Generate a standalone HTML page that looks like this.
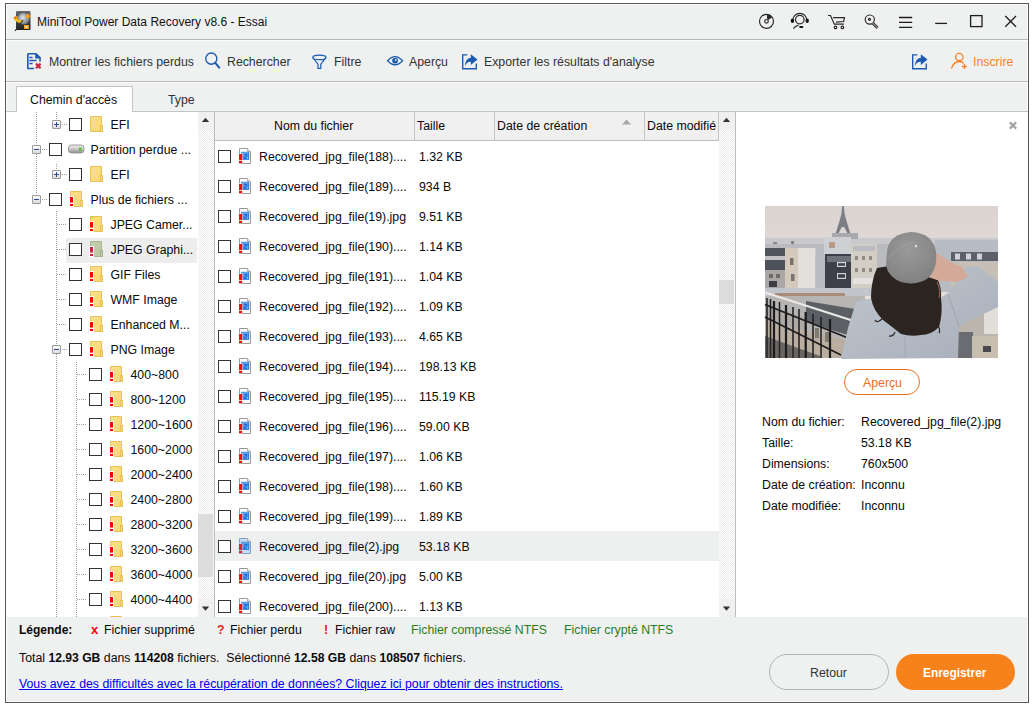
<!DOCTYPE html><html><head><meta charset="utf-8"><style>
*{box-sizing:border-box;margin:0;padding:0}
html,body{width:1032px;height:707px;overflow:hidden;background:#fff}
body{position:relative;font-family:"Liberation Sans",sans-serif;font-size:12.3px;color:#0a0a0a}
.a{position:absolute}
.t{position:absolute;white-space:nowrap;line-height:14px}
svg{position:absolute;overflow:visible}
#win{position:absolute;left:5px;top:3px;width:1024px;height:700px;border:1px solid #585858;background:#eff0f0}
#win:after{content:"";position:absolute;left:0;top:0;right:0;bottom:0;border:1px solid #fbfbfb}
.hl{position:absolute;height:1px;background:#c4c4c4}
.vl{position:absolute;width:1px;background:#c4c4c4}
b{font-size:12.15px}
.cb{position:absolute;width:13px;height:13px;border:1px solid #333;background:#fff}
.trough{position:absolute;background-color:#f7f7f7;background-image:conic-gradient(#ffffff 25%,#ececec 25% 50%,#ffffff 50% 75%,#ececec 75%);background-size:2px 2px}
.dv{position:absolute;width:1px;background-image:linear-gradient(#a0a0a0 50%,transparent 50%);background-size:1px 2px}
.dh{position:absolute;height:1px;background-image:linear-gradient(90deg,#a0a0a0 50%,transparent 50%);background-size:2px 1px}
.ex{position:absolute;width:9px;height:9px;border:1px solid #9a9a9a;border-radius:1px;background:linear-gradient(#fdfdfd,#dcdcdc)}
.ex:before{content:"";position:absolute;left:1px;top:3px;width:5px;height:1px;background:#2c4a8c}
.ex.p:after{content:"";position:absolute;left:3px;top:1px;width:1px;height:5px;background:#2c4a8c}
</style></head><body>
<div id="win"></div>
<div class="hl" style="left:6px;top:39px;width:1022px;background:#b9b9b9"></div><div class="hl" style="left:6px;top:40px;width:1022px;background:#fcfcfc"></div>
<svg style="left:12px;top:10px" width="20" height="23" viewBox="0 0 20 23">
<defs><linearGradient id="ab" x1="0" y1="0" x2="0" y2="1"><stop offset="0" stop-color="#6a6a6a"/><stop offset="1" stop-color="#1e1e1e"/></linearGradient>
<radialGradient id="ad" cx="0.45" cy="0.4" r="0.6"><stop offset="0" stop-color="#e2e6ee"/><stop offset="1" stop-color="#6f757e"/></radialGradient></defs>
<rect x="4" y="1" width="14.5" height="19" rx="1" fill="url(#ab)"/>
<circle cx="11.5" cy="8.8" r="5.8" fill="url(#ad)"/>
<path d="M1.5 8.5 Q4 5 6 6.5 L5 8 Q7 11 11 10.5 L10 13 Q4 13 1.5 8.5Z" fill="#f3b81d"/>
<path d="M1 7.5 L4.5 6 L4 9Z" fill="#f06a14"/>
<path d="M13 6 L16 3.5 L18.5 6.5 L15.5 9 Z" fill="#f7a21a"/>
<line x1="11" y1="10" x2="3" y2="21" stroke="#333" stroke-width="1.2"/>
<rect x="12" y="15" width="5" height="4" fill="#f39a1e"/><rect x="13.5" y="16" width="2" height="2" fill="#fff3b0"/>
</svg>
<div class="t" style="left:37px;top:15px;font-size:12px;color:#111">MiniTool Power Data Recovery v8.6 - Essai</div>
<svg style="left:755px;top:10px" width="62" height="22" viewBox="0 0 62 22">
<g fill="none" stroke="#2a2a2a" stroke-width="1.2">
<circle cx="11.5" cy="11.3" r="7"/>
<circle cx="11.5" cy="11.3" r="1.8"/>
<circle cx="44.8" cy="9.6" r="4.3"/>
<path d="M37.8 10.3 A7 7 0 0 1 51.8 10.3"/>
<path d="M38.4 18.6 Q40 16 43.6 15.1"/>
</g>
<path d="M12 4.3 A7 7 0 0 1 17.3 7.2 L13.3 10 A2.5 2.5 0 0 0 12 8.6Z" fill="#2a2a2a"/>
<ellipse cx="37.4" cy="10.8" rx="1.7" ry="2.2" fill="#111"/><ellipse cx="52.2" cy="10.8" rx="1.7" ry="2.2" fill="#111"/>
<rect x="44.2" y="16.1" width="4.1" height="1.8" rx="0.9" fill="#111"/>
</svg>
<svg style="left:825px;top:10px" width="62" height="22" viewBox="0 0 62 22">
<g fill="none" stroke="#2a2a2a" stroke-width="1.2">
<path d="M3 5.5 H5.5 L9.3 14.2 H19"/>
<path d="M8 7.6 H19.5 L18.6 11.5 L11 12.2"/>
<circle cx="10.5" cy="17.4" r="1.3"/><circle cx="17.4" cy="17.4" r="1.3"/>
<circle cx="44.8" cy="9.6" r="4.6"/>
<circle cx="44.5" cy="9.3" r="1"/>
<path d="M47.6 13 L52.6 18" stroke-width="2.8"/>
</g>
<path d="M47.6 13 L52.6 18" stroke="#f0f0f0" stroke-width="0.8"/>
</svg>
<svg style="left:890px;top:10px" width="140" height="22" viewBox="0 0 140 22">
<g stroke="#1e1e1e" stroke-width="1.3" fill="none">
<path d="M9 7.5 H22.2 M9 12.3 H22.2 M9 17.3 H22.2"/>
<path d="M45.2 13.4 H57"/>
<rect x="80.6" y="5.6" width="11.4" height="11"/>
<path d="M115.3 6 L126 16.8 M126 6 L115.3 16.8"/>
</g></svg>
<div class="hl" style="left:6px;top:81px;width:1022px;background:#b9b9b9"></div><div class="hl" style="left:6px;top:82px;width:1022px;background:#fcfcfc"></div>
<svg style="left:22px;top:50px" width="24" height="22" viewBox="0 0 24 22">
<path d="M5.8 3.7 H14 L18 7.7 V11.5 M12 18.5 H5.8 V3.7" fill="none" stroke="#1c5bb0" stroke-width="1.6"/>
<path d="M13.2 3 L18.6 8.4 H13.2Z" fill="#1c5bb0"/>
<path d="M7.3 7.5 H10.6 M7.3 10.5 H14.6 M7.3 13.5 H10.6" stroke="#1c5bb0" stroke-width="1.3"/>
<path d="M14 13.6 L18.6 18.2 M18.6 13.6 L14 18.2" stroke="#d2263e" stroke-width="2.2"/>
</svg>
<div class="t" style="left:49px;top:55px;color:#333">Montrer les fichiers perdus</div>
<svg style="left:200px;top:50px" width="24" height="22" viewBox="0 0 24 22">
<circle cx="11.3" cy="8.6" r="5.6" fill="none" stroke="#1c5bb0" stroke-width="1.4"/>
<path d="M15.3 12.8 L19.2 17.6" stroke="#1c5bb0" stroke-width="2" stroke-linecap="round"/>
</svg>
<div class="t" style="left:227px;top:55px;color:#333">Rechercher</div>
<svg style="left:308px;top:50px" width="24" height="22" viewBox="0 0 24 22">
<ellipse cx="11.4" cy="7.4" rx="6.6" ry="2.2" fill="none" stroke="#1c5bb0" stroke-width="1.2"/>
<path d="M4.8 7.6 L10 14.2 V18.4 H12.8 V14.2 L18 7.6" fill="none" stroke="#1c5bb0" stroke-width="1.2"/>
</svg>
<div class="t" style="left:334px;top:55px;color:#333">Filtre</div>
<svg style="left:384px;top:50px" width="24" height="22" viewBox="0 0 24 22">
<path d="M3.6 10.7 Q11 2.6 18.6 10.7 Q11 18.8 3.6 10.7Z" fill="none" stroke="#1c5bb0" stroke-width="1.3"/>
<circle cx="11.1" cy="10.6" r="2.9" fill="#1c5bb0"/>
<circle cx="11.7" cy="9.9" r="0.9" fill="#f0f0f0"/>
</svg>
<div class="t" style="left:409px;top:55px;color:#333">Aperçu</div>
<svg style="left:461px;top:53px" width="20" height="20" viewBox="0 0 20 20">
<path d="M6.3 1.9 H1.7 V15.7 H15.3 V10.5" fill="none" stroke="#1c5bb0" stroke-width="1.4"/>
<path d="M9.8 1.3 L16.5 6.6 L9.8 12 V8.8 Q5.8 8.6 3.8 13.2 Q4.2 5.5 9.8 4.7Z" fill="#1c5bb0"/>
</svg>
<div class="t" style="left:484px;top:55px;color:#333">Exporter les résultats d'analyse</div>
<svg style="left:911px;top:53px" width="20" height="20" viewBox="0 0 20 20">
<path d="M6.3 1.9 H1.7 V15.7 H15.3 V10.5" fill="none" stroke="#1c5bb0" stroke-width="1.4"/>
<path d="M9.8 1.3 L16.5 6.6 L9.8 12 V8.8 Q5.8 8.6 3.8 13.2 Q4.2 5.5 9.8 4.7Z" fill="#1c5bb0"/>
</svg>
<svg style="left:945px;top:50px" width="26" height="22" viewBox="0 0 26 22">
<circle cx="14.3" cy="7" r="3.7" fill="none" stroke="#f5822a" stroke-width="1.3"/>
<path d="M6.4 18.5 Q9 11.5 14.3 11.5 Q17 11.5 18.8 13.3" fill="none" stroke="#f5822a" stroke-width="1.3"/>
<path d="M19.4 14 V19 M16.9 16.5 H21.9" stroke="#f5822a" stroke-width="1.3"/>
</svg>
<div class="t" style="left:973px;top:55px;color:#f5822a">Inscrire</div>
<div class="hl" style="left:6px;top:111px;width:10px"></div>
<div class="hl" style="left:133px;top:111px;width:895px"></div>
<div class="a" style="left:16px;top:86px;width:117px;height:26px;border:1px solid #c4c4c4;border-bottom:none;background:#fff"></div>
<div class="t" style="left:30px;top:93px;color:#111">Chemin d'accès</div>
<div class="t" style="left:168px;top:93px;color:#333">Type</div>
<div class="a" style="left:6px;top:112px;width:192px;height:505px;background:#fff;overflow:hidden" id="tree">
<div class="ex p" style="left:46px;top:8px"></div>
<div class="dh" style="left:56px;top:12px;width:5px"></div>
<div class="cb" style="left:63px;top:6px"></div>
<svg style="left:84px;top:4px" width="14" height="17" viewBox="0 0 14 17"><defs><linearGradient id="fg0" x1="0" y1="0" x2="1" y2="1"><stop offset="0" stop-color="#fbe08a"/><stop offset="1" stop-color="#f8d775"/></linearGradient></defs><path d="M0.5 0.5 H11.5 V15.5 H0.5Z" fill="url(#fg0)" stroke="#e8c257"/><rect x="10.5" y="9.5" width="2" height="6" fill="#f8d775" stroke="#e8c257"/></svg>
<div class="t" style="left:104.5px;top:5.5px">EFI</div>
<div class="ex " style="left:26px;top:33px"></div>
<div class="dh" style="left:36px;top:37px;width:5px"></div>
<div class="cb" style="left:43px;top:31px"></div>
<svg style="left:62px;top:32px" width="17" height="10" viewBox="0 0 17 10">
<defs><linearGradient id="dg" x1="0" y1="0" x2="0" y2="1"><stop offset="0" stop-color="#f2f2f2"/><stop offset="0.5" stop-color="#c9c9c9"/><stop offset="1" stop-color="#8c8c8c"/></linearGradient></defs>
<rect x="0.5" y="1" width="15.5" height="8" rx="3" fill="url(#dg)" stroke="#9a9a9a"/>
<rect x="11" y="3.5" width="2.5" height="3.5" fill="#5bc236"/></svg>
<div class="t" style="left:84.5px;top:30.5px">Partition perdue ...</div>
<div class="ex p" style="left:46px;top:58px"></div>
<div class="dh" style="left:56px;top:62px;width:5px"></div>
<div class="cb" style="left:63px;top:56px"></div>
<svg style="left:84px;top:54px" width="14" height="17" viewBox="0 0 14 17"><defs><linearGradient id="fg0" x1="0" y1="0" x2="1" y2="1"><stop offset="0" stop-color="#fbe08a"/><stop offset="1" stop-color="#f8d775"/></linearGradient></defs><path d="M0.5 0.5 H11.5 V15.5 H0.5Z" fill="url(#fg0)" stroke="#e8c257"/><rect x="10.5" y="9.5" width="2" height="6" fill="#f8d775" stroke="#e8c257"/></svg>
<div class="t" style="left:104.5px;top:55.5px">EFI</div>
<div class="ex " style="left:26px;top:83px"></div>
<div class="dh" style="left:36px;top:87px;width:5px"></div>
<div class="cb" style="left:43px;top:81px"></div>
<svg style="left:64px;top:79px" width="14" height="17" viewBox="0 0 14 17"><defs><linearGradient id="fg0" x1="0" y1="0" x2="1" y2="1"><stop offset="0" stop-color="#fbe08a"/><stop offset="1" stop-color="#f8d775"/></linearGradient></defs><path d="M0.5 0.5 H11.5 V15.5 H0.5Z" fill="url(#fg0)" stroke="#e8c257"/><rect x="10.5" y="9.5" width="2" height="6" fill="#f8d775" stroke="#e8c257"/><rect x="-1" y="5" width="5" height="11.5" fill="#fff"/><rect x="0" y="6" width="3" height="5.6" fill="#ff0000"/><rect x="0" y="13" width="3" height="2" fill="#ff0000"/></svg>
<div class="t" style="left:84.5px;top:80.5px">Plus de fichiers ...</div>
<div class="dh" style="left:51px;top:112px;width:10px"></div>
<div class="cb" style="left:63px;top:106px"></div>
<svg style="left:84px;top:104px" width="14" height="17" viewBox="0 0 14 17"><defs><linearGradient id="fg0" x1="0" y1="0" x2="1" y2="1"><stop offset="0" stop-color="#fbe08a"/><stop offset="1" stop-color="#f8d775"/></linearGradient></defs><path d="M0.5 0.5 H11.5 V15.5 H0.5Z" fill="url(#fg0)" stroke="#e8c257"/><rect x="10.5" y="9.5" width="2" height="6" fill="#f8d775" stroke="#e8c257"/><rect x="-1" y="5" width="5" height="11.5" fill="#fff"/><rect x="0" y="6" width="3" height="5.6" fill="#ff0000"/><rect x="0" y="13" width="3" height="2" fill="#ff0000"/></svg>
<div class="t" style="left:104.5px;top:105.5px">JPEG Camer...</div>
<div class="a" style="left:60px;top:126px;width:131px;height:25px;background:#ededed"></div>
<div class="dh" style="left:51px;top:137px;width:10px"></div>
<div class="cb" style="left:63px;top:131px"></div>
<svg style="left:84px;top:129px" width="14" height="17" viewBox="0 0 14 17"><defs><linearGradient id="fg1" x1="0" y1="0" x2="1" y2="1"><stop offset="0" stop-color="#c5cfae"/><stop offset="1" stop-color="#bcc6a4"/></linearGradient></defs><path d="M0.5 0.5 H11.5 V15.5 H0.5Z" fill="url(#fg1)" stroke="#a9b58e"/><rect x="10.5" y="9.5" width="2" height="6" fill="#bcc6a4" stroke="#a9b58e"/><rect x="-1" y="5" width="5" height="11.5" fill="#fff"/><rect x="0" y="6" width="3" height="5.6" fill="#c8283c"/><rect x="0" y="13" width="3" height="2" fill="#c8283c"/></svg>
<div class="t" style="left:104.5px;top:130.5px">JPEG Graphi...</div>
<div class="dh" style="left:51px;top:162px;width:10px"></div>
<div class="cb" style="left:63px;top:156px"></div>
<svg style="left:84px;top:154px" width="14" height="17" viewBox="0 0 14 17"><defs><linearGradient id="fg0" x1="0" y1="0" x2="1" y2="1"><stop offset="0" stop-color="#fbe08a"/><stop offset="1" stop-color="#f8d775"/></linearGradient></defs><path d="M0.5 0.5 H11.5 V15.5 H0.5Z" fill="url(#fg0)" stroke="#e8c257"/><rect x="10.5" y="9.5" width="2" height="6" fill="#f8d775" stroke="#e8c257"/><rect x="-1" y="5" width="5" height="11.5" fill="#fff"/><rect x="0" y="6" width="3" height="5.6" fill="#ff0000"/><rect x="0" y="13" width="3" height="2" fill="#ff0000"/></svg>
<div class="t" style="left:104.5px;top:155.5px">GIF Files</div>
<div class="dh" style="left:51px;top:187px;width:10px"></div>
<div class="cb" style="left:63px;top:181px"></div>
<svg style="left:84px;top:179px" width="14" height="17" viewBox="0 0 14 17"><defs><linearGradient id="fg0" x1="0" y1="0" x2="1" y2="1"><stop offset="0" stop-color="#fbe08a"/><stop offset="1" stop-color="#f8d775"/></linearGradient></defs><path d="M0.5 0.5 H11.5 V15.5 H0.5Z" fill="url(#fg0)" stroke="#e8c257"/><rect x="10.5" y="9.5" width="2" height="6" fill="#f8d775" stroke="#e8c257"/><rect x="-1" y="5" width="5" height="11.5" fill="#fff"/><rect x="0" y="6" width="3" height="5.6" fill="#ff0000"/><rect x="0" y="13" width="3" height="2" fill="#ff0000"/></svg>
<div class="t" style="left:104.5px;top:180.5px">WMF Image</div>
<div class="dh" style="left:51px;top:212px;width:10px"></div>
<div class="cb" style="left:63px;top:206px"></div>
<svg style="left:84px;top:204px" width="14" height="17" viewBox="0 0 14 17"><defs><linearGradient id="fg0" x1="0" y1="0" x2="1" y2="1"><stop offset="0" stop-color="#fbe08a"/><stop offset="1" stop-color="#f8d775"/></linearGradient></defs><path d="M0.5 0.5 H11.5 V15.5 H0.5Z" fill="url(#fg0)" stroke="#e8c257"/><rect x="10.5" y="9.5" width="2" height="6" fill="#f8d775" stroke="#e8c257"/><rect x="-1" y="5" width="5" height="11.5" fill="#fff"/><rect x="0" y="6" width="3" height="5.6" fill="#ff0000"/><rect x="0" y="13" width="3" height="2" fill="#ff0000"/></svg>
<div class="t" style="left:104.5px;top:205.5px">Enhanced M...</div>
<div class="ex " style="left:46px;top:233px"></div>
<div class="dh" style="left:56px;top:237px;width:5px"></div>
<div class="cb" style="left:63px;top:231px"></div>
<svg style="left:84px;top:229px" width="14" height="17" viewBox="0 0 14 17"><defs><linearGradient id="fg0" x1="0" y1="0" x2="1" y2="1"><stop offset="0" stop-color="#fbe08a"/><stop offset="1" stop-color="#f8d775"/></linearGradient></defs><path d="M0.5 0.5 H11.5 V15.5 H0.5Z" fill="url(#fg0)" stroke="#e8c257"/><rect x="10.5" y="9.5" width="2" height="6" fill="#f8d775" stroke="#e8c257"/><rect x="-1" y="5" width="5" height="11.5" fill="#fff"/><rect x="0" y="6" width="3" height="5.6" fill="#ff0000"/><rect x="0" y="13" width="3" height="2" fill="#ff0000"/></svg>
<div class="t" style="left:104.5px;top:230.5px">PNG Image</div>
<div class="dh" style="left:71px;top:262px;width:10px"></div>
<div class="cb" style="left:83px;top:256px"></div>
<svg style="left:104px;top:254px" width="14" height="17" viewBox="0 0 14 17"><defs><linearGradient id="fg0" x1="0" y1="0" x2="1" y2="1"><stop offset="0" stop-color="#fbe08a"/><stop offset="1" stop-color="#f8d775"/></linearGradient></defs><path d="M0.5 0.5 H11.5 V15.5 H0.5Z" fill="url(#fg0)" stroke="#e8c257"/><rect x="10.5" y="9.5" width="2" height="6" fill="#f8d775" stroke="#e8c257"/><rect x="-1" y="5" width="5" height="11.5" fill="#fff"/><rect x="0" y="6" width="3" height="5.6" fill="#ff0000"/><rect x="0" y="13" width="3" height="2" fill="#ff0000"/></svg>
<div class="t" style="left:124.5px;top:255.5px">400~800</div>
<div class="dh" style="left:71px;top:287px;width:10px"></div>
<div class="cb" style="left:83px;top:281px"></div>
<svg style="left:104px;top:279px" width="14" height="17" viewBox="0 0 14 17"><defs><linearGradient id="fg0" x1="0" y1="0" x2="1" y2="1"><stop offset="0" stop-color="#fbe08a"/><stop offset="1" stop-color="#f8d775"/></linearGradient></defs><path d="M0.5 0.5 H11.5 V15.5 H0.5Z" fill="url(#fg0)" stroke="#e8c257"/><rect x="10.5" y="9.5" width="2" height="6" fill="#f8d775" stroke="#e8c257"/><rect x="-1" y="5" width="5" height="11.5" fill="#fff"/><rect x="0" y="6" width="3" height="5.6" fill="#ff0000"/><rect x="0" y="13" width="3" height="2" fill="#ff0000"/></svg>
<div class="t" style="left:124.5px;top:280.5px">800~1200</div>
<div class="dh" style="left:71px;top:312px;width:10px"></div>
<div class="cb" style="left:83px;top:306px"></div>
<svg style="left:104px;top:304px" width="14" height="17" viewBox="0 0 14 17"><defs><linearGradient id="fg0" x1="0" y1="0" x2="1" y2="1"><stop offset="0" stop-color="#fbe08a"/><stop offset="1" stop-color="#f8d775"/></linearGradient></defs><path d="M0.5 0.5 H11.5 V15.5 H0.5Z" fill="url(#fg0)" stroke="#e8c257"/><rect x="10.5" y="9.5" width="2" height="6" fill="#f8d775" stroke="#e8c257"/><rect x="-1" y="5" width="5" height="11.5" fill="#fff"/><rect x="0" y="6" width="3" height="5.6" fill="#ff0000"/><rect x="0" y="13" width="3" height="2" fill="#ff0000"/></svg>
<div class="t" style="left:124.5px;top:305.5px">1200~1600</div>
<div class="dh" style="left:71px;top:337px;width:10px"></div>
<div class="cb" style="left:83px;top:331px"></div>
<svg style="left:104px;top:329px" width="14" height="17" viewBox="0 0 14 17"><defs><linearGradient id="fg0" x1="0" y1="0" x2="1" y2="1"><stop offset="0" stop-color="#fbe08a"/><stop offset="1" stop-color="#f8d775"/></linearGradient></defs><path d="M0.5 0.5 H11.5 V15.5 H0.5Z" fill="url(#fg0)" stroke="#e8c257"/><rect x="10.5" y="9.5" width="2" height="6" fill="#f8d775" stroke="#e8c257"/><rect x="-1" y="5" width="5" height="11.5" fill="#fff"/><rect x="0" y="6" width="3" height="5.6" fill="#ff0000"/><rect x="0" y="13" width="3" height="2" fill="#ff0000"/></svg>
<div class="t" style="left:124.5px;top:330.5px">1600~2000</div>
<div class="dh" style="left:71px;top:362px;width:10px"></div>
<div class="cb" style="left:83px;top:356px"></div>
<svg style="left:104px;top:354px" width="14" height="17" viewBox="0 0 14 17"><defs><linearGradient id="fg0" x1="0" y1="0" x2="1" y2="1"><stop offset="0" stop-color="#fbe08a"/><stop offset="1" stop-color="#f8d775"/></linearGradient></defs><path d="M0.5 0.5 H11.5 V15.5 H0.5Z" fill="url(#fg0)" stroke="#e8c257"/><rect x="10.5" y="9.5" width="2" height="6" fill="#f8d775" stroke="#e8c257"/><rect x="-1" y="5" width="5" height="11.5" fill="#fff"/><rect x="0" y="6" width="3" height="5.6" fill="#ff0000"/><rect x="0" y="13" width="3" height="2" fill="#ff0000"/></svg>
<div class="t" style="left:124.5px;top:355.5px">2000~2400</div>
<div class="dh" style="left:71px;top:387px;width:10px"></div>
<div class="cb" style="left:83px;top:381px"></div>
<svg style="left:104px;top:379px" width="14" height="17" viewBox="0 0 14 17"><defs><linearGradient id="fg0" x1="0" y1="0" x2="1" y2="1"><stop offset="0" stop-color="#fbe08a"/><stop offset="1" stop-color="#f8d775"/></linearGradient></defs><path d="M0.5 0.5 H11.5 V15.5 H0.5Z" fill="url(#fg0)" stroke="#e8c257"/><rect x="10.5" y="9.5" width="2" height="6" fill="#f8d775" stroke="#e8c257"/><rect x="-1" y="5" width="5" height="11.5" fill="#fff"/><rect x="0" y="6" width="3" height="5.6" fill="#ff0000"/><rect x="0" y="13" width="3" height="2" fill="#ff0000"/></svg>
<div class="t" style="left:124.5px;top:380.5px">2400~2800</div>
<div class="dh" style="left:71px;top:412px;width:10px"></div>
<div class="cb" style="left:83px;top:406px"></div>
<svg style="left:104px;top:404px" width="14" height="17" viewBox="0 0 14 17"><defs><linearGradient id="fg0" x1="0" y1="0" x2="1" y2="1"><stop offset="0" stop-color="#fbe08a"/><stop offset="1" stop-color="#f8d775"/></linearGradient></defs><path d="M0.5 0.5 H11.5 V15.5 H0.5Z" fill="url(#fg0)" stroke="#e8c257"/><rect x="10.5" y="9.5" width="2" height="6" fill="#f8d775" stroke="#e8c257"/><rect x="-1" y="5" width="5" height="11.5" fill="#fff"/><rect x="0" y="6" width="3" height="5.6" fill="#ff0000"/><rect x="0" y="13" width="3" height="2" fill="#ff0000"/></svg>
<div class="t" style="left:124.5px;top:405.5px">2800~3200</div>
<div class="dh" style="left:71px;top:437px;width:10px"></div>
<div class="cb" style="left:83px;top:431px"></div>
<svg style="left:104px;top:429px" width="14" height="17" viewBox="0 0 14 17"><defs><linearGradient id="fg0" x1="0" y1="0" x2="1" y2="1"><stop offset="0" stop-color="#fbe08a"/><stop offset="1" stop-color="#f8d775"/></linearGradient></defs><path d="M0.5 0.5 H11.5 V15.5 H0.5Z" fill="url(#fg0)" stroke="#e8c257"/><rect x="10.5" y="9.5" width="2" height="6" fill="#f8d775" stroke="#e8c257"/><rect x="-1" y="5" width="5" height="11.5" fill="#fff"/><rect x="0" y="6" width="3" height="5.6" fill="#ff0000"/><rect x="0" y="13" width="3" height="2" fill="#ff0000"/></svg>
<div class="t" style="left:124.5px;top:430.5px">3200~3600</div>
<div class="dh" style="left:71px;top:462px;width:10px"></div>
<div class="cb" style="left:83px;top:456px"></div>
<svg style="left:104px;top:454px" width="14" height="17" viewBox="0 0 14 17"><defs><linearGradient id="fg0" x1="0" y1="0" x2="1" y2="1"><stop offset="0" stop-color="#fbe08a"/><stop offset="1" stop-color="#f8d775"/></linearGradient></defs><path d="M0.5 0.5 H11.5 V15.5 H0.5Z" fill="url(#fg0)" stroke="#e8c257"/><rect x="10.5" y="9.5" width="2" height="6" fill="#f8d775" stroke="#e8c257"/><rect x="-1" y="5" width="5" height="11.5" fill="#fff"/><rect x="0" y="6" width="3" height="5.6" fill="#ff0000"/><rect x="0" y="13" width="3" height="2" fill="#ff0000"/></svg>
<div class="t" style="left:124.5px;top:455.5px">3600~4000</div>
<div class="dh" style="left:71px;top:487px;width:10px"></div>
<div class="cb" style="left:83px;top:481px"></div>
<svg style="left:104px;top:479px" width="14" height="17" viewBox="0 0 14 17"><defs><linearGradient id="fg0" x1="0" y1="0" x2="1" y2="1"><stop offset="0" stop-color="#fbe08a"/><stop offset="1" stop-color="#f8d775"/></linearGradient></defs><path d="M0.5 0.5 H11.5 V15.5 H0.5Z" fill="url(#fg0)" stroke="#e8c257"/><rect x="10.5" y="9.5" width="2" height="6" fill="#f8d775" stroke="#e8c257"/><rect x="-1" y="5" width="5" height="11.5" fill="#fff"/><rect x="0" y="6" width="3" height="5.6" fill="#ff0000"/><rect x="0" y="13" width="3" height="2" fill="#ff0000"/></svg>
<div class="t" style="left:124.5px;top:480.5px">4000~4400</div>
<div class="dh" style="left:71px;top:512px;width:10px"></div>
<div class="cb" style="left:83px;top:506px"></div>
<svg style="left:104px;top:504px" width="14" height="17" viewBox="0 0 14 17"><defs><linearGradient id="fg0" x1="0" y1="0" x2="1" y2="1"><stop offset="0" stop-color="#fbe08a"/><stop offset="1" stop-color="#f8d775"/></linearGradient></defs><path d="M0.5 0.5 H11.5 V15.5 H0.5Z" fill="url(#fg0)" stroke="#e8c257"/><rect x="10.5" y="9.5" width="2" height="6" fill="#f8d775" stroke="#e8c257"/><rect x="-1" y="5" width="5" height="11.5" fill="#fff"/><rect x="0" y="6" width="3" height="5.6" fill="#ff0000"/><rect x="0" y="13" width="3" height="2" fill="#ff0000"/></svg>
<div class="dv" style="left:30px;top:0px;height:32px"></div>
<div class="dv" style="left:30px;top:42px;height:40px"></div>
<div class="dv" style="left:50px;top:0px;height:8px"></div>
<div class="dv" style="left:50px;top:52px;height:6px"></div>
<div class="dv" style="left:50px;top:99px;height:134px"></div>
<div class="dv" style="left:50px;top:242px;height:263px"></div>
<div class="dv" style="left:70px;top:250px;height:255px"></div>
</div>
<div class="trough" style="left:198px;top:112px;width:16px;height:505px"></div>
<div class="a" style="left:198px;top:112px;width:16px;height:18px;background:#f0f0f0"></div>
<div class="a" style="left:198px;top:599px;width:16px;height:18px;background:#f0f0f0"></div>
<div class="a" style="left:198px;top:514px;width:15px;height:63px;background:#dcdcdc"></div>
<svg style="left:198px;top:112px" width="16" height="505" viewBox="0 0 16 505"><path d="M3.8 10 L7.5 5.8 L11.2 10Z" fill="#333"/><path d="M3.8 494.5 L7.5 498.7 L11.2 494.5Z" fill="#333"/></svg>
<div class="vl" style="left:214px;top:112px;height:505px;background:#bdbdbd"></div>
<div class="a" style="left:215px;top:112px;width:504px;height:505px;background:#fff;overflow:hidden">
<div class="a" style="left:0;top:0;width:504px;height:28px;background:#f0f0f0"></div>
<div class="hl" style="left:0;top:28px;width:504px;background:#bdbdbd"></div>
<div class="vl" style="left:199px;top:0;height:28px;background:#c6c6c6"></div>
<div class="vl" style="left:279px;top:0;height:28px;background:#c6c6c6"></div>
<div class="vl" style="left:429px;top:0;height:28px;background:#c6c6c6"></div>
<div class="vl" style="left:503px;top:0;height:28px;background:#c6c6c6"></div>
<div class="t" style="left:59px;top:7px;">Nom du fichier</div>
<div class="t" style="left:202px;top:7px;">Taille</div>
<div class="t" style="left:282px;top:7px;">Date de création</div>
<div class="t" style="left:432px;top:7px;">Date modifié</div>
<svg style="left:407px;top:7px" width="10" height="6" viewBox="0 0 10 6"><path d="M0 5.5 L4.5 0.5 L9 5.5Z" fill="#a8a8a8"/></svg>
<div class="cb" style="left:3px;top:38px"></div>
<svg style="left:23px;top:34px" width="14" height="18" viewBox="0 0 14 18">
<path d="M1.5 2.5 H9.5 L12.5 5.5 V17.5 H1.5Z" fill="#fff" stroke="#9a9a9a"/>
<path d="M9.5 2.5 V5.5 H12.5" fill="#e8e8e8" stroke="#b0b0b0"/>
<rect x="3.2" y="5.8" width="8" height="8" fill="#1a73d9"/>
<rect x="4" y="6.6" width="6.6" height="0.8" fill="#bcd8fb"/>
<path d="M5 8.4 L9.8 12.8 M5 8.4 V12.8 M9.8 8.4 V12.8" stroke="#9cc6f7" stroke-width="0.7" fill="none"/>
<rect x="0.5" y="7.5" width="4" height="10" fill="#fff"/>
<rect x="1" y="8" width="3.2" height="6.2" fill="#ee1111"/><rect x="1" y="15" width="3.2" height="2.2" fill="#ee1111"/>
</svg>
<div class="t" style="left:44px;top:38px;">Recovered_jpg_file(188)....</div>
<div class="t" style="left:204px;top:38px;">1.32 KB</div>
<div class="cb" style="left:3px;top:68px"></div>
<svg style="left:23px;top:64px" width="14" height="18" viewBox="0 0 14 18">
<path d="M1.5 2.5 H9.5 L12.5 5.5 V17.5 H1.5Z" fill="#fff" stroke="#9a9a9a"/>
<path d="M9.5 2.5 V5.5 H12.5" fill="#e8e8e8" stroke="#b0b0b0"/>
<rect x="3.2" y="5.8" width="8" height="8" fill="#1a73d9"/>
<rect x="4" y="6.6" width="6.6" height="0.8" fill="#bcd8fb"/>
<path d="M5 8.4 L9.8 12.8 M5 8.4 V12.8 M9.8 8.4 V12.8" stroke="#9cc6f7" stroke-width="0.7" fill="none"/>
<rect x="0.5" y="7.5" width="4" height="10" fill="#fff"/>
<rect x="1" y="8" width="3.2" height="6.2" fill="#ee1111"/><rect x="1" y="15" width="3.2" height="2.2" fill="#ee1111"/>
</svg>
<div class="t" style="left:44px;top:68px;">Recovered_jpg_file(189)....</div>
<div class="t" style="left:204px;top:68px;">934 B</div>
<div class="cb" style="left:3px;top:98px"></div>
<svg style="left:23px;top:94px" width="14" height="18" viewBox="0 0 14 18">
<path d="M1.5 2.5 H9.5 L12.5 5.5 V17.5 H1.5Z" fill="#fff" stroke="#9a9a9a"/>
<path d="M9.5 2.5 V5.5 H12.5" fill="#e8e8e8" stroke="#b0b0b0"/>
<rect x="3.2" y="5.8" width="8" height="8" fill="#1a73d9"/>
<rect x="4" y="6.6" width="6.6" height="0.8" fill="#bcd8fb"/>
<path d="M5 8.4 L9.8 12.8 M5 8.4 V12.8 M9.8 8.4 V12.8" stroke="#9cc6f7" stroke-width="0.7" fill="none"/>
<rect x="0.5" y="7.5" width="4" height="10" fill="#fff"/>
<rect x="1" y="8" width="3.2" height="6.2" fill="#ee1111"/><rect x="1" y="15" width="3.2" height="2.2" fill="#ee1111"/>
</svg>
<div class="t" style="left:44px;top:98px;">Recovered_jpg_file(19).jpg</div>
<div class="t" style="left:204px;top:98px;">9.51 KB</div>
<div class="cb" style="left:3px;top:128px"></div>
<svg style="left:23px;top:124px" width="14" height="18" viewBox="0 0 14 18">
<path d="M1.5 2.5 H9.5 L12.5 5.5 V17.5 H1.5Z" fill="#fff" stroke="#9a9a9a"/>
<path d="M9.5 2.5 V5.5 H12.5" fill="#e8e8e8" stroke="#b0b0b0"/>
<rect x="3.2" y="5.8" width="8" height="8" fill="#1a73d9"/>
<rect x="4" y="6.6" width="6.6" height="0.8" fill="#bcd8fb"/>
<path d="M5 8.4 L9.8 12.8 M5 8.4 V12.8 M9.8 8.4 V12.8" stroke="#9cc6f7" stroke-width="0.7" fill="none"/>
<rect x="0.5" y="7.5" width="4" height="10" fill="#fff"/>
<rect x="1" y="8" width="3.2" height="6.2" fill="#ee1111"/><rect x="1" y="15" width="3.2" height="2.2" fill="#ee1111"/>
</svg>
<div class="t" style="left:44px;top:128px;">Recovered_jpg_file(190)....</div>
<div class="t" style="left:204px;top:128px;">1.14 KB</div>
<div class="cb" style="left:3px;top:158px"></div>
<svg style="left:23px;top:154px" width="14" height="18" viewBox="0 0 14 18">
<path d="M1.5 2.5 H9.5 L12.5 5.5 V17.5 H1.5Z" fill="#fff" stroke="#9a9a9a"/>
<path d="M9.5 2.5 V5.5 H12.5" fill="#e8e8e8" stroke="#b0b0b0"/>
<rect x="3.2" y="5.8" width="8" height="8" fill="#1a73d9"/>
<rect x="4" y="6.6" width="6.6" height="0.8" fill="#bcd8fb"/>
<path d="M5 8.4 L9.8 12.8 M5 8.4 V12.8 M9.8 8.4 V12.8" stroke="#9cc6f7" stroke-width="0.7" fill="none"/>
<rect x="0.5" y="7.5" width="4" height="10" fill="#fff"/>
<rect x="1" y="8" width="3.2" height="6.2" fill="#ee1111"/><rect x="1" y="15" width="3.2" height="2.2" fill="#ee1111"/>
</svg>
<div class="t" style="left:44px;top:158px;">Recovered_jpg_file(191)....</div>
<div class="t" style="left:204px;top:158px;">1.04 KB</div>
<div class="cb" style="left:3px;top:188px"></div>
<svg style="left:23px;top:184px" width="14" height="18" viewBox="0 0 14 18">
<path d="M1.5 2.5 H9.5 L12.5 5.5 V17.5 H1.5Z" fill="#fff" stroke="#9a9a9a"/>
<path d="M9.5 2.5 V5.5 H12.5" fill="#e8e8e8" stroke="#b0b0b0"/>
<rect x="3.2" y="5.8" width="8" height="8" fill="#1a73d9"/>
<rect x="4" y="6.6" width="6.6" height="0.8" fill="#bcd8fb"/>
<path d="M5 8.4 L9.8 12.8 M5 8.4 V12.8 M9.8 8.4 V12.8" stroke="#9cc6f7" stroke-width="0.7" fill="none"/>
<rect x="0.5" y="7.5" width="4" height="10" fill="#fff"/>
<rect x="1" y="8" width="3.2" height="6.2" fill="#ee1111"/><rect x="1" y="15" width="3.2" height="2.2" fill="#ee1111"/>
</svg>
<div class="t" style="left:44px;top:188px;">Recovered_jpg_file(192)....</div>
<div class="t" style="left:204px;top:188px;">1.09 KB</div>
<div class="cb" style="left:3px;top:218px"></div>
<svg style="left:23px;top:214px" width="14" height="18" viewBox="0 0 14 18">
<path d="M1.5 2.5 H9.5 L12.5 5.5 V17.5 H1.5Z" fill="#fff" stroke="#9a9a9a"/>
<path d="M9.5 2.5 V5.5 H12.5" fill="#e8e8e8" stroke="#b0b0b0"/>
<rect x="3.2" y="5.8" width="8" height="8" fill="#1a73d9"/>
<rect x="4" y="6.6" width="6.6" height="0.8" fill="#bcd8fb"/>
<path d="M5 8.4 L9.8 12.8 M5 8.4 V12.8 M9.8 8.4 V12.8" stroke="#9cc6f7" stroke-width="0.7" fill="none"/>
<rect x="0.5" y="7.5" width="4" height="10" fill="#fff"/>
<rect x="1" y="8" width="3.2" height="6.2" fill="#ee1111"/><rect x="1" y="15" width="3.2" height="2.2" fill="#ee1111"/>
</svg>
<div class="t" style="left:44px;top:218px;">Recovered_jpg_file(193)....</div>
<div class="t" style="left:204px;top:218px;">4.65 KB</div>
<div class="cb" style="left:3px;top:248px"></div>
<svg style="left:23px;top:244px" width="14" height="18" viewBox="0 0 14 18">
<path d="M1.5 2.5 H9.5 L12.5 5.5 V17.5 H1.5Z" fill="#fff" stroke="#9a9a9a"/>
<path d="M9.5 2.5 V5.5 H12.5" fill="#e8e8e8" stroke="#b0b0b0"/>
<rect x="3.2" y="5.8" width="8" height="8" fill="#1a73d9"/>
<rect x="4" y="6.6" width="6.6" height="0.8" fill="#bcd8fb"/>
<path d="M5 8.4 L9.8 12.8 M5 8.4 V12.8 M9.8 8.4 V12.8" stroke="#9cc6f7" stroke-width="0.7" fill="none"/>
<rect x="0.5" y="7.5" width="4" height="10" fill="#fff"/>
<rect x="1" y="8" width="3.2" height="6.2" fill="#ee1111"/><rect x="1" y="15" width="3.2" height="2.2" fill="#ee1111"/>
</svg>
<div class="t" style="left:44px;top:248px;">Recovered_jpg_file(194)....</div>
<div class="t" style="left:204px;top:248px;">198.13 KB</div>
<div class="cb" style="left:3px;top:278px"></div>
<svg style="left:23px;top:274px" width="14" height="18" viewBox="0 0 14 18">
<path d="M1.5 2.5 H9.5 L12.5 5.5 V17.5 H1.5Z" fill="#fff" stroke="#9a9a9a"/>
<path d="M9.5 2.5 V5.5 H12.5" fill="#e8e8e8" stroke="#b0b0b0"/>
<rect x="3.2" y="5.8" width="8" height="8" fill="#1a73d9"/>
<rect x="4" y="6.6" width="6.6" height="0.8" fill="#bcd8fb"/>
<path d="M5 8.4 L9.8 12.8 M5 8.4 V12.8 M9.8 8.4 V12.8" stroke="#9cc6f7" stroke-width="0.7" fill="none"/>
<rect x="0.5" y="7.5" width="4" height="10" fill="#fff"/>
<rect x="1" y="8" width="3.2" height="6.2" fill="#ee1111"/><rect x="1" y="15" width="3.2" height="2.2" fill="#ee1111"/>
</svg>
<div class="t" style="left:44px;top:278px;">Recovered_jpg_file(195)....</div>
<div class="t" style="left:204px;top:278px;">115.19 KB</div>
<div class="cb" style="left:3px;top:308px"></div>
<svg style="left:23px;top:304px" width="14" height="18" viewBox="0 0 14 18">
<path d="M1.5 2.5 H9.5 L12.5 5.5 V17.5 H1.5Z" fill="#fff" stroke="#9a9a9a"/>
<path d="M9.5 2.5 V5.5 H12.5" fill="#e8e8e8" stroke="#b0b0b0"/>
<rect x="3.2" y="5.8" width="8" height="8" fill="#1a73d9"/>
<rect x="4" y="6.6" width="6.6" height="0.8" fill="#bcd8fb"/>
<path d="M5 8.4 L9.8 12.8 M5 8.4 V12.8 M9.8 8.4 V12.8" stroke="#9cc6f7" stroke-width="0.7" fill="none"/>
<rect x="0.5" y="7.5" width="4" height="10" fill="#fff"/>
<rect x="1" y="8" width="3.2" height="6.2" fill="#ee1111"/><rect x="1" y="15" width="3.2" height="2.2" fill="#ee1111"/>
</svg>
<div class="t" style="left:44px;top:308px;">Recovered_jpg_file(196)....</div>
<div class="t" style="left:204px;top:308px;">59.00 KB</div>
<div class="cb" style="left:3px;top:338px"></div>
<svg style="left:23px;top:334px" width="14" height="18" viewBox="0 0 14 18">
<path d="M1.5 2.5 H9.5 L12.5 5.5 V17.5 H1.5Z" fill="#fff" stroke="#9a9a9a"/>
<path d="M9.5 2.5 V5.5 H12.5" fill="#e8e8e8" stroke="#b0b0b0"/>
<rect x="3.2" y="5.8" width="8" height="8" fill="#1a73d9"/>
<rect x="4" y="6.6" width="6.6" height="0.8" fill="#bcd8fb"/>
<path d="M5 8.4 L9.8 12.8 M5 8.4 V12.8 M9.8 8.4 V12.8" stroke="#9cc6f7" stroke-width="0.7" fill="none"/>
<rect x="0.5" y="7.5" width="4" height="10" fill="#fff"/>
<rect x="1" y="8" width="3.2" height="6.2" fill="#ee1111"/><rect x="1" y="15" width="3.2" height="2.2" fill="#ee1111"/>
</svg>
<div class="t" style="left:44px;top:338px;">Recovered_jpg_file(197)....</div>
<div class="t" style="left:204px;top:338px;">1.06 KB</div>
<div class="cb" style="left:3px;top:368px"></div>
<svg style="left:23px;top:364px" width="14" height="18" viewBox="0 0 14 18">
<path d="M1.5 2.5 H9.5 L12.5 5.5 V17.5 H1.5Z" fill="#fff" stroke="#9a9a9a"/>
<path d="M9.5 2.5 V5.5 H12.5" fill="#e8e8e8" stroke="#b0b0b0"/>
<rect x="3.2" y="5.8" width="8" height="8" fill="#1a73d9"/>
<rect x="4" y="6.6" width="6.6" height="0.8" fill="#bcd8fb"/>
<path d="M5 8.4 L9.8 12.8 M5 8.4 V12.8 M9.8 8.4 V12.8" stroke="#9cc6f7" stroke-width="0.7" fill="none"/>
<rect x="0.5" y="7.5" width="4" height="10" fill="#fff"/>
<rect x="1" y="8" width="3.2" height="6.2" fill="#ee1111"/><rect x="1" y="15" width="3.2" height="2.2" fill="#ee1111"/>
</svg>
<div class="t" style="left:44px;top:368px;">Recovered_jpg_file(198)....</div>
<div class="t" style="left:204px;top:368px;">1.60 KB</div>
<div class="cb" style="left:3px;top:398px"></div>
<svg style="left:23px;top:394px" width="14" height="18" viewBox="0 0 14 18">
<path d="M1.5 2.5 H9.5 L12.5 5.5 V17.5 H1.5Z" fill="#fff" stroke="#9a9a9a"/>
<path d="M9.5 2.5 V5.5 H12.5" fill="#e8e8e8" stroke="#b0b0b0"/>
<rect x="3.2" y="5.8" width="8" height="8" fill="#1a73d9"/>
<rect x="4" y="6.6" width="6.6" height="0.8" fill="#bcd8fb"/>
<path d="M5 8.4 L9.8 12.8 M5 8.4 V12.8 M9.8 8.4 V12.8" stroke="#9cc6f7" stroke-width="0.7" fill="none"/>
<rect x="0.5" y="7.5" width="4" height="10" fill="#fff"/>
<rect x="1" y="8" width="3.2" height="6.2" fill="#ee1111"/><rect x="1" y="15" width="3.2" height="2.2" fill="#ee1111"/>
</svg>
<div class="t" style="left:44px;top:398px;">Recovered_jpg_file(199)....</div>
<div class="t" style="left:204px;top:398px;">1.89 KB</div>
<div class="a" style="left:0;top:419px;width:504px;height:30px;background:#eef0f0"></div>
<div class="cb" style="left:3px;top:428px"></div>
<svg style="left:23px;top:424px" width="14" height="18" viewBox="0 0 14 18">
<path d="M1.5 2.5 H9.5 L12.5 5.5 V17.5 H1.5Z" fill="#c6dcf4" stroke="#7f9fc4"/>
<path d="M9.5 2.5 V5.5 H12.5" fill="#e8e8e8" stroke="#b0b0b0"/>
<rect x="3.2" y="5.8" width="8" height="8" fill="#1a73d9"/>
<rect x="4" y="6.6" width="6.6" height="0.8" fill="#bcd8fb"/>
<path d="M5 8.4 L9.8 12.8 M5 8.4 V12.8 M9.8 8.4 V12.8" stroke="#9cc6f7" stroke-width="0.7" fill="none"/>
<rect x="0.5" y="7.5" width="4" height="10" fill="#c6dcf4"/>
<rect x="1" y="8" width="3.2" height="6.2" fill="#cf2a3c"/><rect x="1" y="15" width="3.2" height="2.2" fill="#cf2a3c"/>
</svg>
<div class="t" style="left:44px;top:428px;">Recovered_jpg_file(2).jpg</div>
<div class="t" style="left:204px;top:428px;">53.18 KB</div>
<div class="cb" style="left:3px;top:458px"></div>
<svg style="left:23px;top:454px" width="14" height="18" viewBox="0 0 14 18">
<path d="M1.5 2.5 H9.5 L12.5 5.5 V17.5 H1.5Z" fill="#fff" stroke="#9a9a9a"/>
<path d="M9.5 2.5 V5.5 H12.5" fill="#e8e8e8" stroke="#b0b0b0"/>
<rect x="3.2" y="5.8" width="8" height="8" fill="#1a73d9"/>
<rect x="4" y="6.6" width="6.6" height="0.8" fill="#bcd8fb"/>
<path d="M5 8.4 L9.8 12.8 M5 8.4 V12.8 M9.8 8.4 V12.8" stroke="#9cc6f7" stroke-width="0.7" fill="none"/>
<rect x="0.5" y="7.5" width="4" height="10" fill="#fff"/>
<rect x="1" y="8" width="3.2" height="6.2" fill="#ee1111"/><rect x="1" y="15" width="3.2" height="2.2" fill="#ee1111"/>
</svg>
<div class="t" style="left:44px;top:458px;">Recovered_jpg_file(20).jpg</div>
<div class="t" style="left:204px;top:458px;">5.00 KB</div>
<div class="cb" style="left:3px;top:488px"></div>
<svg style="left:23px;top:484px" width="14" height="18" viewBox="0 0 14 18">
<path d="M1.5 2.5 H9.5 L12.5 5.5 V17.5 H1.5Z" fill="#fff" stroke="#9a9a9a"/>
<path d="M9.5 2.5 V5.5 H12.5" fill="#e8e8e8" stroke="#b0b0b0"/>
<rect x="3.2" y="5.8" width="8" height="8" fill="#1a73d9"/>
<rect x="4" y="6.6" width="6.6" height="0.8" fill="#bcd8fb"/>
<path d="M5 8.4 L9.8 12.8 M5 8.4 V12.8 M9.8 8.4 V12.8" stroke="#9cc6f7" stroke-width="0.7" fill="none"/>
<rect x="0.5" y="7.5" width="4" height="10" fill="#fff"/>
<rect x="1" y="8" width="3.2" height="6.2" fill="#ee1111"/><rect x="1" y="15" width="3.2" height="2.2" fill="#ee1111"/>
</svg>
<div class="t" style="left:44px;top:488px;">Recovered_jpg_file(200)....</div>
<div class="t" style="left:204px;top:488px;">1.13 KB</div>
</div>
<div class="trough" style="left:719px;top:112px;width:16px;height:505px"></div>
<div class="a" style="left:719px;top:112px;width:16px;height:18px;background:#f0f0f0"></div>
<div class="a" style="left:719px;top:599px;width:16px;height:18px;background:#f0f0f0"></div>
<div class="a" style="left:719px;top:280px;width:15px;height:24px;background:#dcdcdc"></div>
<svg style="left:719px;top:112px" width="16" height="505" viewBox="0 0 16 505"><path d="M3.8 10 L7.5 5.8 L11.2 10Z" fill="#333"/><path d="M3.8 494.5 L7.5 498.7 L11.2 494.5Z" fill="#333"/></svg>
<div class="vl" style="left:735px;top:112px;height:505px;background:#bdbdbd"></div>
<div class="a" style="left:736px;top:112px;width:291px;height:505px;background:#fff"></div>
<svg style="left:1008px;top:120px" width="10" height="11" viewBox="0 0 10 11"><path d="M1.8 2.2 L8.2 8.6 M8.2 2.2 L1.8 8.6" stroke="#a2a2a2" stroke-width="2.2"/></svg>
<svg style="left:765px;top:206px" width="233" height="152" viewBox="0 0 233 152">
<defs>
<linearGradient id="sky" x1="0" y1="0" x2="0" y2="1"><stop offset="0" stop-color="#dad3d0"/><stop offset="0.6" stop-color="#e6e0dd"/><stop offset="1" stop-color="#e8e3e0"/></linearGradient>
<linearGradient id="coat" x1="0" y1="0" x2="1" y2="1"><stop offset="0" stop-color="#bfc6cf"/><stop offset="1" stop-color="#a8afba"/></linearGradient>
<radialGradient id="ber" cx="0.45" cy="0.35" r="0.7"><stop offset="0" stop-color="#9a9a9a"/><stop offset="1" stop-color="#808080"/></radialGradient>
<filter id="bl" x="-5%" y="-5%" width="110%" height="110%"><feGaussianBlur stdDeviation="0.5"/></filter>
</defs>
<rect width="233" height="152" fill="url(#sky)"/>
<g filter="url(#bl)">
<!-- far roofline -->
<rect x="0" y="32" width="233" height="8" fill="#c9c9cd"/>
<rect x="8" y="36" width="4" height="4" fill="#8f8580"/><rect x="26" y="35" width="3" height="5" fill="#8a7f78"/>
<rect x="0" y="38" width="233" height="48" fill="#b9bbc0"/>
<!-- eiffel tower -->
<path d="M77.2 0 H78.8 L79.6 8 L81.5 15 L85.5 28 H82.8 L79.2 21 H76.8 L73.2 28 H70.5 L74.5 15 L76.4 8Z" fill="#7c7e86"/>
<rect x="67" y="27" width="26" height="6" fill="#a6a8ae"/>
<!-- left block -->
<rect x="0" y="42" width="20" height="8" fill="#50555e"/>
<rect x="0" y="50" width="20" height="4" fill="#c2c2c6"/>
<rect x="0" y="54" width="20" height="10" fill="#4d515a"/>
<rect x="0" y="64" width="20" height="18" fill="#aaa8a6"/>
<rect x="4" y="68" width="4" height="4" fill="#6d6a68"/><rect x="11" y="68" width="4" height="4" fill="#6d6a68"/>
<rect x="4" y="75" width="8" height="6" fill="#3e3e42"/>
<rect x="20" y="42" width="13" height="40" fill="#d3cabd"/>
<rect x="25" y="52" width="3.5" height="7" fill="#7a736c"/><rect x="26" y="68" width="3.5" height="7" fill="#7a736c"/>
<rect x="33" y="42" width="17.5" height="40" fill="#e3dfdb"/>
<rect x="50.5" y="48" width="11.5" height="34" fill="#b9bcc2"/>
<rect x="60" y="48" width="26" height="34" fill="#3d4149"/>
<rect x="62" y="50" width="24" height="6" fill="#6e727a"/>
<rect x="72" y="56" width="9" height="5" fill="#d6d7d9"/><rect x="73" y="57.2" width="7" height="2.6" fill="#3d4149"/>
<rect x="72" y="67" width="9" height="6" fill="#d2d3d6"/><rect x="73" y="68.2" width="7" height="3.6" fill="#3d4149"/>
<rect x="59" y="31" width="27" height="17" fill="#cfd0d4"/><rect x="64" y="36" width="6" height="6" fill="#b59a88"/>
<rect x="86" y="38" width="26" height="44" fill="#d2cdc5"/>
<rect x="88" y="40" width="22" height="5" fill="#b9bbc0"/>
<rect x="90" y="50" width="3" height="4" fill="#8d8a86"/><rect x="97" y="50" width="3" height="4" fill="#8d8a86"/><rect x="104" y="50" width="3" height="4" fill="#8d8a86"/>
<rect x="90" y="62" width="3" height="4" fill="#8d8a86"/><rect x="97" y="62" width="3" height="4" fill="#8d8a86"/><rect x="104" y="62" width="3" height="4" fill="#8d8a86"/>
<rect x="88" y="72" width="22" height="6" fill="#e4e2de"/>
<!-- right buildings -->
<rect x="170" y="34" width="63" height="52" fill="#b7bbc3"/>
<rect x="186" y="46" width="47" height="9" fill="#5d6168"/>
<rect x="190" y="47.5" width="5" height="6" fill="#cfd2d6"/><rect x="201" y="47.5" width="5" height="6" fill="#cfd2d6"/><rect x="212" y="47.5" width="5" height="6" fill="#cfd2d6"/>
<rect x="186" y="56" width="47" height="30" fill="#c5bfb6"/>
<!-- rooftops mid -->
<rect x="0" y="82" width="112" height="8" fill="#c2c6cc"/>
<rect x="10" y="87" width="70" height="5" fill="#a98c7a"/>
<rect x="0" y="90" width="100" height="62" fill="#b7b5b3"/>
<path d="M41 95 L90 103 L89 131 L41 116Z" fill="#5c5e64"/>
<path d="M0 100 L41 112 V152 H0Z" fill="#aeaaa6"/>
<path d="M0 114 L85 136 V152 H0Z" fill="#b9ae9f"/>
<rect x="50" y="122" width="4" height="10" fill="#7f7a72"/><rect x="60" y="126" width="4" height="10" fill="#7f7a72"/>
<!-- lower right -->
<rect x="193" y="86" width="40" height="66" fill="#bab5ad"/>
<rect x="219" y="98" width="14" height="30" fill="#e2ded9"/>
<rect x="191" y="126" width="17" height="26" fill="#6a6c71"/>
<rect x="207" y="130" width="26" height="22" fill="#c8beb0"/>
<rect x="218" y="140" width="8" height="6" fill="#4a4a4e"/>
</g>
<!-- railing -->
<g stroke="#1d1d1f" fill="none">
<path d="M0 98.5 L83 132" stroke-width="1.8"/>
<path d="M0 111 L76 149" stroke-width="1.8"/>
<path d="M2 92 V152 M5.5 93 V152 M9 95 V152 M14.5 96 V152 M21 99 V152 M28 101 V152 M34 103 V152 M40.7 106 V152 M48 108 V152 M56 111 V152 M65 113 V152" stroke-width="1.5"/>
</g>
<path d="M0 130 L55 150 V152 H0Z" fill="#2a2a2c" opacity="0.55"/>
<path d="M9 95 V152 M21 99 V152 M40.7 106 V152 M65 113 V152" stroke="#1d1d1f" stroke-width="2.2"/>
<path d="M0 86.5 L88 114.8" stroke="#ebe9e7" stroke-width="2.2"/>
<!-- coat -->
<path d="M76 153 L83 122 L91 96 L101 93 L112 93 L130 100 L165 98 L183 87 L195 72 L199 62 L212 60 L233 76 V101 L194 120 L193 152Z" fill="url(#coat)"/>
<path d="M183 88 L194 120" stroke="#9aa1ab" stroke-width="0.8" fill="none"/>
<path d="M140 130 V152" stroke="#9ea5af" stroke-width="0.7" fill="none"/>
<!-- hair -->
<path d="M106 92 Q106 75 112 62 L124 60 L172 72 Q177 82 176 92 Q178 108 174 121 Q166 129 156 129 Q146 131 136 128 Q126 120 118 114 Q108 104 106 92Z" fill="#2b2421"/>
<path d="M118 112 Q112 118 110 114 M172 118 Q176 124 174 127 M130 126 Q128 131 124 130" stroke="#2b2421" stroke-width="1.2" fill="none"/>
<path d="M172 76 Q176 84 174 92" stroke="#8c5a44" stroke-width="1.2" fill="none"/>
<!-- hand -->
<path d="M160 50 L172 47 L186 56 L197 61 L203 71 L193 76 L175 75 L160 70Z" fill="#d3aa99"/>
<path d="M161 53 L166 51 M160 60 L165 59 M161 67 L166 66" stroke="#1b1b1e" stroke-width="2"/>
<!-- beret -->
<path d="M122 45 Q124 28 146 26 Q168 27 171 46 Q173 64 162 73 Q150 80 136 76 Q122 70 121 58Z" fill="url(#ber)"/>
<path d="M124 52 Q132 40 150 36" stroke="#a0a0a0" stroke-width="1" fill="none"/>
<circle cx="151" cy="40" r="1.2" fill="#e0e0e0"/>
</svg>

<div class="a" style="left:844px;top:369px;width:76px;height:26px;border:1px solid #e8711e;border-radius:13px"></div>
<div class="t" style="left:863px;top:376px;color:#e8711e">Aperçu</div>
<div class="t" style="left:762px;top:415px;font-size:12.3px">Nom du fichier:</div>
<div class="t" style="left:861px;top:415px;font-size:12.3px">Recovered_jpg_file(2).jpg</div>
<div class="t" style="left:762px;top:436px;font-size:12.3px">Taille:</div>
<div class="t" style="left:861px;top:436px;font-size:12.3px">53.18 KB</div>
<div class="t" style="left:762px;top:457px;font-size:12.3px">Dimensions:</div>
<div class="t" style="left:861px;top:457px;font-size:12.3px">760x500</div>
<div class="t" style="left:762px;top:478px;font-size:12.3px">Date de création:</div>
<div class="t" style="left:861px;top:478px;font-size:12.3px">Inconnu</div>
<div class="t" style="left:762px;top:499px;font-size:12.3px">Date modifiée:</div>
<div class="t" style="left:861px;top:499px;font-size:12.3px">Inconnu</div>
<div class="t" style="left:19px;top:623px;font-weight:bold;font-size:12px">Légende:</div>
<div class="t" style="left:91px;top:623px;font-weight:bold;color:#ff0000;font-size:13px">x</div>
<div class="t" style="left:104px;top:623px;">Fichier supprimé</div>
<div class="t" style="left:217px;top:623px;font-weight:bold;color:#e31b1b">?</div>
<div class="t" style="left:230px;top:623px;">Fichier perdu</div>
<div class="t" style="left:324px;top:623px;font-weight:bold;color:#e31b1b">!</div>
<div class="t" style="left:335px;top:623px;">Fichier raw</div>
<div class="t" style="left:411px;top:623px;color:#1f801f">Fichier compressé NTFS</div>
<div class="t" style="left:564px;top:623px;color:#1f801f">Fichier crypté NTFS</div>
<div class="t" style="left:19px;top:651px;">Total <b>12.93 GB</b> dans <b>114208</b> fichiers.&nbsp; Sélectionné <b>12.58 GB</b> dans <b>108507</b> fichiers.</div>
<div class="t" style="left:19px;top:677px;color:#0000ee;text-decoration:underline">Vous avez des difficultés avec la récupération de données? Cliquez ici pour obtenir des instructions.</div>
<div class="a" style="left:769px;top:654px;width:120px;height:36px;border:1px solid #b4b4b4;border-radius:18px"></div>
<div class="t" style="left:810px;top:666px;color:#333">Retour</div>
<div class="a" style="left:896px;top:654px;width:119px;height:36px;background:#f7821b;border-radius:18px"></div>
<div class="t" style="left:923px;top:666px;color:#fff;font-weight:bold;font-size:11.9px">Enregistrer</div>
</body></html>
